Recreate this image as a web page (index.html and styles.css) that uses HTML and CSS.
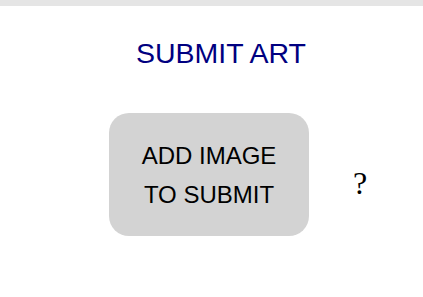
FILE: index.html
```html
<!DOCTYPE html>
<html>
<head>
<meta charset="utf-8">
<link rel="stylesheet" href="styles.css">
</head>
<body>
<div class="topbar"></div>
<h1 class="title">SUBMIT ART</h1>
<div class="row">
  <div class="upload">ADD IMAGE<br>TO SUBMIT</div>
  <div class="help">?</div>
</div>
</body>
</html>
```
FILE: styles.css
```css
html, body { margin: 0; padding: 0; background: #fff; }
body { width: 423px; height: 297px; overflow: hidden; }
.topbar { height: 6px; background: #e5e5e5; }
.title {
  margin: 31px 0 0 0;
  font-family: "Liberation Sans", Arial, sans-serif;
  font-weight: normal;
  font-size: 28.5px;
  line-height: 32px;
  color: #000080;
  text-align: center;
  padding-left: 19px;
}
.row {
  display: flex;
  align-items: center;
  padding-left: 109px;
  margin-top: 44px;
}
.upload {
  width: 200px;
  height: 123px;
  box-sizing: border-box;
  background: #d3d3d3;
  border-radius: 20px;
  display: flex;
  align-items: center;
  justify-content: center;
  text-align: center;
  font-family: "Liberation Sans", Arial, sans-serif;
  font-size: 24px;
  line-height: 39px;
  color: #000;
}
.help {
  margin-left: 44px;
  font-family: "Liberation Serif", "Times New Roman", serif;
  font-size: 32px;
  line-height: 36px;
  color: #000;
  padding-top: 16px;
}
```
